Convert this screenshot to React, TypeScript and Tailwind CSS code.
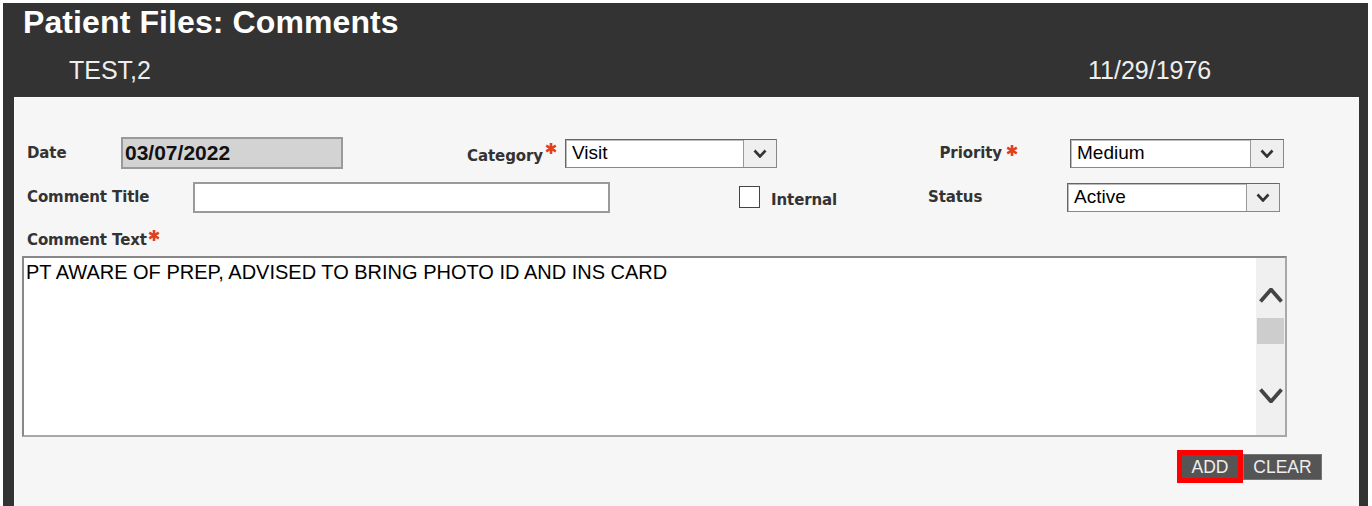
import React from 'react';

const Star = ({ className = '' }: { className?: string }) => (
  <svg width="12" height="11" viewBox="0 0 12 11" className={className}>
    <g stroke="#e2401c" strokeWidth="2.6" strokeLinecap="butt">
      <line x1="6" y1="0" x2="6" y2="11" />
      <line x1="1.2" y1="2.7" x2="10.8" y2="8.3" />
      <line x1="1.2" y1="8.3" x2="10.8" y2="2.7" />
    </g>
  </svg>
);

const Chevron = ({ up = false, w = 14, h = 9, sw = 2.6, color = '#333' }: { up?: boolean; w?: number; h?: number; sw?: number; color?: string }) => (
  <svg width={w} height={h} viewBox={`0 0 ${w} ${h}`}>
    <path
      d={up ? `M1.5 ${h - 1.5} L${w / 2} 1.5 L${w - 1.5} ${h - 1.5}` : `M1.5 1.5 L${w / 2} ${h - 1.5} L${w - 1.5} 1.5`}
      fill="none"
      stroke={color}
      strokeWidth={sw}
    />
  </svg>
);

const Select = ({ value, width }: { value: string; width: string }) => (
  <div className={`${width} h-[29px] flex bg-white border border-[#888] border-t-[#666] border-l-[#666] shadow-[inset_1px_1px_0_#bbb]`}>
    <div className="flex-1 pl-[6px] text-[19px] leading-[26px] text-black font-['Liberation_Sans',Arial,sans-serif]">{value}</div>
    <div className="w-[33px] bg-[#efefef] border-l border-[#999] flex items-center justify-center">
      <Chevron />
    </div>
  </div>
);

const label = "font-['DejaVu_Sans',Verdana,sans-serif] font-bold text-[15px] leading-[17px] text-[#333] tracking-[-0.1px]";

export default function App() {
  return (
    <div className="w-[1372px] h-[506px] bg-white pt-[3px] pl-[3px] pr-[4px] overflow-hidden font-['Liberation_Sans',Arial,sans-serif]">
      <div className="bg-[#333333] h-full flex flex-col">
        <div className="h-[94px] flex flex-col shrink-0">
          <h1 className="pt-[3px] pl-[20px] text-[32px] leading-[32px] font-bold text-white tracking-[0.1px]">Patient Files: Comments</h1>
          <div className="mt-[20px] flex text-[25px] leading-[25px] text-[#eeeeee]">
            <div className="pl-[66px] w-[1085px]">TEST,2</div>
            <div>11/29/1976</div>
          </div>
        </div>

        <div className="ml-[11px] mr-[9px] flex-1 bg-[#f6f6f6] border-t border-l border-[#fafafa] flex flex-col">
          {/* row 1 */}
          <div className="mt-[39px] ml-[12px] flex items-center h-[32px]">
            <div className={`${label} w-[94px]`}>Date</div>
            <div className="w-[222px] h-[32px] bg-[#d3d3d3] border-2 border-[#9a9a9a] pl-[2px] text-[21px] leading-[27px] font-bold text-[#111]">
              03/07/2022
            </div>
            <div className="w-[222px] h-[32px] flex justify-end items-start pr-[8px] pt-[6px]">
              <span className={`${label} mt-[5px]`}>Category</span>
              <Star className="ml-[2px]" />
            </div>
            <Select value="Visit" width="w-[212px]" />
            <div className="w-[293px] h-[32px] flex justify-end items-start pr-[52px] pt-[8px]">
              <span className={label}>Priority</span>
              <Star className="ml-[4px]" />
            </div>
            <Select value="Medium" width="w-[214px]" />
          </div>

          {/* row 2 */}
          <div className="mt-[13px] ml-[12px] flex items-center h-[31px]">
            <div className={`${label} w-[166px]`}>Comment Title</div>
            <div className="w-[417px] h-[31px] bg-white border-2 border-[#9a9a9a]" />
            <div className="w-[129px]" />
            <div className="w-[21px] h-[22px] bg-white border border-[#444] self-start mt-[4px]" />
            <div className="w-[168px] pl-[11px] self-end pb-[1px]">
              <span className={label}>Internal</span>
            </div>
            <div className={`${label} w-[139px]`}>Status</div>
            <Select value="Active" width="w-[213px]" />
          </div>

          {/* row 3 */}
          <div className="mt-[19px] ml-[12px] flex items-start">
            <span className={label}>Comment Text</span>
            <Star className="ml-[1px] -mt-[2px]" />
          </div>
          <div className="mt-[7px] ml-[7px] w-[1265px] h-[181px] flex bg-white border-2 border-[#a8a8a8] border-t-[#888] border-l-[#888]">
            <div className="flex-1 pl-[2px] pt-[2px] text-[20px] leading-[24px] text-black">
              PT AWARE OF PREP, ADVISED TO BRING PHOTO ID AND INS CARD
            </div>
            <div className="w-[29px] bg-[#f0f0f0] flex flex-col items-center">
              <div className="mt-[30px]">
                <Chevron up w={24} h={15} sw={3.8} color="#444" />
              </div>
              <div className="mt-[15px] w-[27px] h-[26px] bg-[#cdcdcd]" />
              <div className="mt-[44px]">
                <Chevron w={24} h={15} sw={3.8} color="#444" />
              </div>
            </div>
          </div>

          {/* buttons */}
          <div className="mt-[13px] flex justify-end items-center mr-[37px]">
            <button className="w-[66px] h-[33px] border-[5px] border-[#ff0000] bg-[#555] text-[#eee] text-[17.5px] leading-[20px]">
              ADD
            </button>
            <button className="w-[79px] h-[26px] bg-[#555] border border-[#777] text-[#eee] text-[17.5px] leading-[20px]">
              CLEAR
            </button>
          </div>
        </div>
      </div>
    </div>
  );
}
